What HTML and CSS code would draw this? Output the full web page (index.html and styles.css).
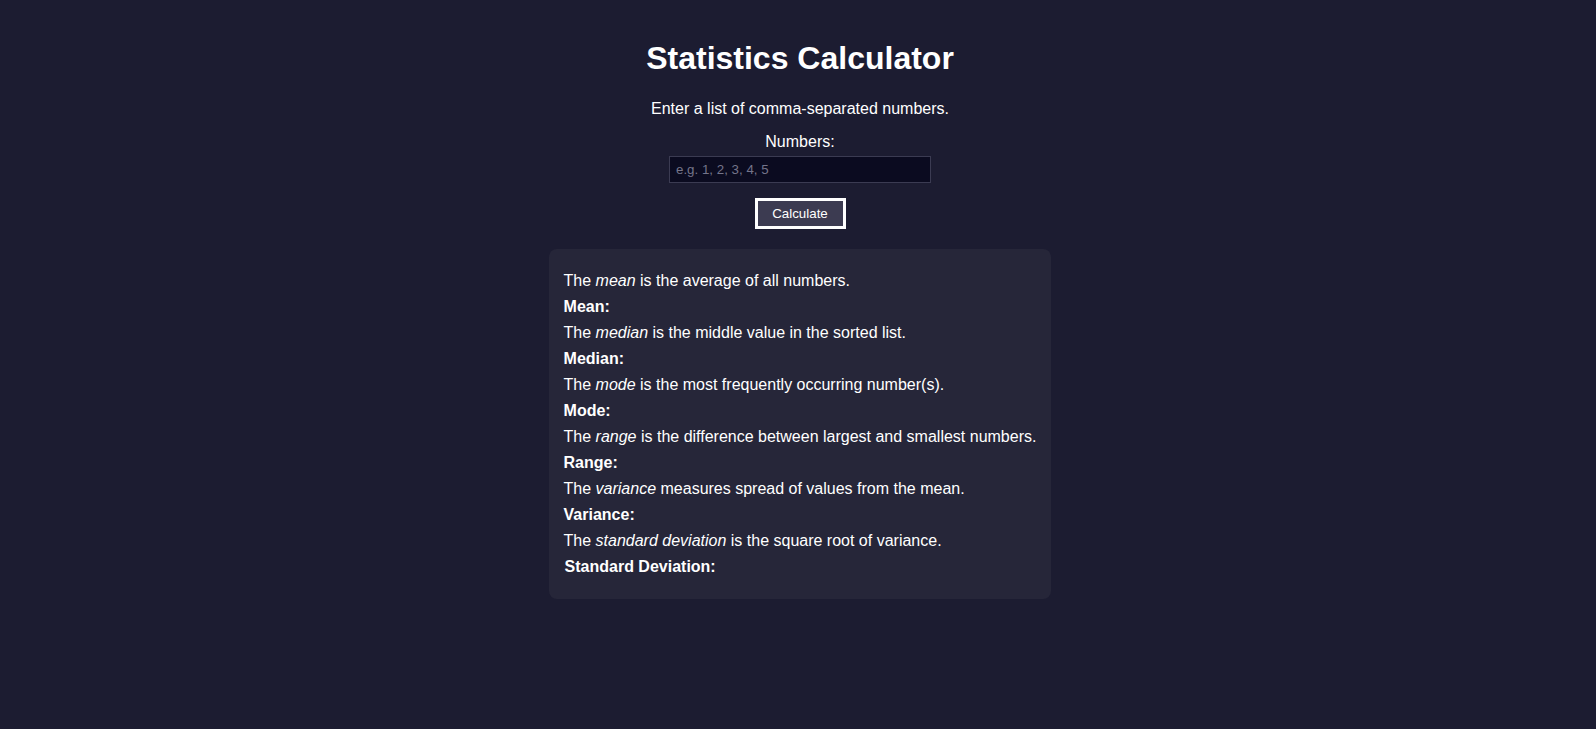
FILE: index.html
```html
<!DOCTYPE html>
<html lang="en">
<head>
<meta charset="utf-8">
<title>Statistics Calculator</title>
<link rel="stylesheet" href="styles.css">
</head>
<body>
<main class="page">
  <h1 class="title">Statistics Calculator</h1>
  <p class="intro">Enter a list of comma-separated numbers.</p>
  <label class="label" for="nums">Numbers:</label>
  <input class="input" id="nums" type="text" placeholder="e.g. 1, 2, 3, 4, 5">
  <button class="btn" type="button">Calculate</button>
  <section class="card">
    <p class="desc">The <em>mean</em> is the average of all numbers.</p>
    <div class="stat">Mean:</div>
    <p class="desc">The <em>median</em> is the middle value in the sorted list.</p>
    <div class="stat">Median:</div>
    <p class="desc">The <em>mode</em> is the most frequently occurring number(s).</p>
    <div class="stat">Mode:</div>
    <p class="desc">The <em>range</em> is the difference between largest and smallest numbers.</p>
    <div class="stat">Range:</div>
    <p class="desc">The <em>variance</em> measures spread of values from the mean.</p>
    <div class="stat">Variance:</div>
    <p class="desc">The <em>standard deviation</em> is the square root of variance.</p>
    <div class="stat stat-last">Standard Deviation:</div>
  </section>
</main>
</body>
</html>
```
FILE: styles.css
```css
html, body {
  margin: 0;
  padding: 0;
  background: #1c1c31;
  color: #ffffff;
  font-family: "Liberation Sans", Arial, sans-serif;
}
.page {
  display: flex;
  flex-direction: column;
  align-items: center;
  padding: 40px 0 40px 4px;
}
.title {
  margin: 0;
  font-size: 32px;
  line-height: 37px;
  font-weight: 700;
}
.intro {
  margin: 23px 0 0;
  font-size: 16px;
  line-height: 18px;
}
.label {
  margin-top: 15px;
  font-size: 16px;
  line-height: 18px;
}
.input {
  margin-top: 5px;
  box-sizing: border-box;
  width: 262px;
  height: 27px;
  padding: 0 6px;
  background: #0b0b20;
  border: 1px solid #3b3b52;
  color: #ffffff;
  font-family: "Liberation Sans", Arial, sans-serif;
  font-size: 13.33px;
  outline: none;
}
.input::placeholder {
  color: #74748a;
}
.btn {
  margin-top: 15px;
  box-sizing: border-box;
  width: 91px;
  height: 31px;
  padding: 0;
  background: #3c3b51;
  border: 3px solid #ffffff;
  color: #ffffff;
  font-family: "Liberation Sans", Arial, sans-serif;
  font-size: 13.33px;
}
.card {
  margin-top: 20px;
  width: fit-content;
  padding: 19px 15px;
  background: #262639;
  border-radius: 8px;
}
.desc, .stat {
  margin: 0;
  font-size: 16px;
  line-height: 26px;
}
.stat {
  font-weight: 700;
}
.stat-last {
  padding-left: 1px;
}
```
